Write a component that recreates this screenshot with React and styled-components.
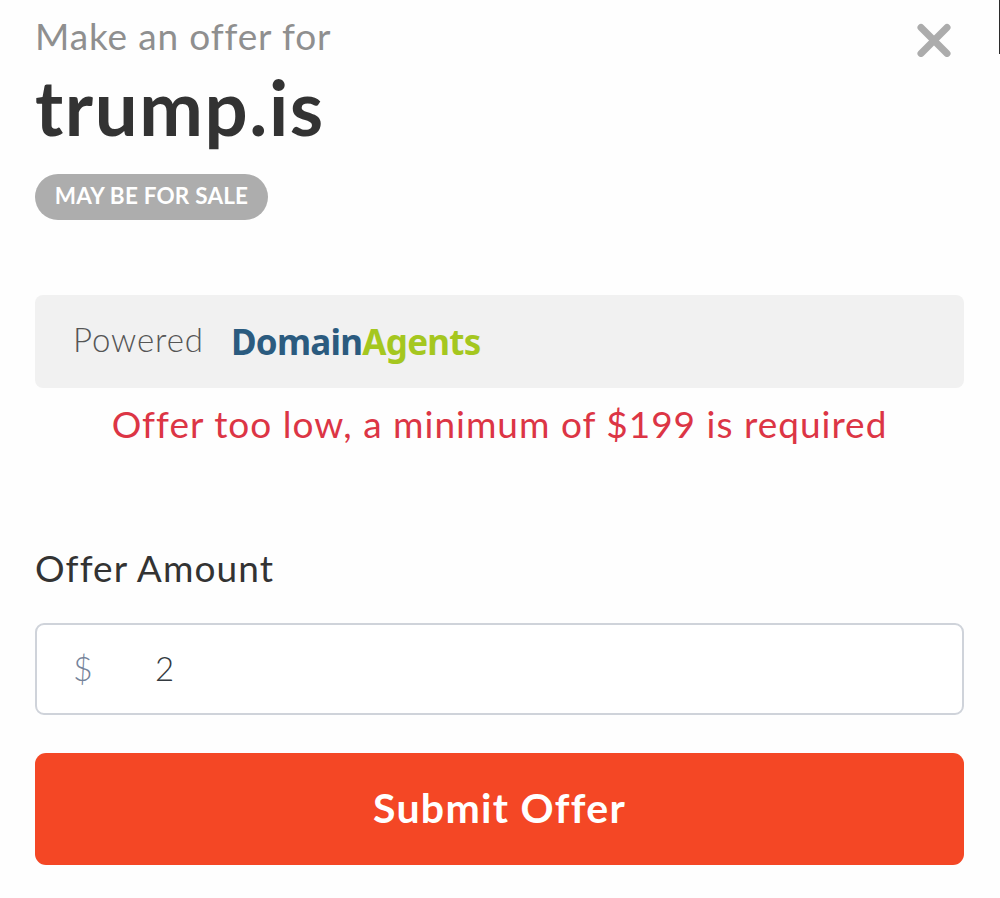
import React, { useState } from 'react';
import styled, { createGlobalStyle } from 'styled-components';

const GlobalStyle = createGlobalStyle`
  * {
    box-sizing: border-box;
  }

  body {
    margin: 0;
    background: #fff;
    font-family: Lato, 'Open Sans', sans-serif;
  }
`;

const Modal = styled.main`
  position: relative;
  height: 898px;
  padding: 14px 36px 0 35px;
  overflow: hidden;
  background: #fefefe;
`;

const PageEdge = styled.span`
  position: absolute;
  top: 0;
  right: 0;
  width: 1px;
  height: 54px;
  background: #2b2b2b;
`;

const Header = styled.header`
  display: flex;
  justify-content: space-between;
  align-items: flex-start;
`;

const Intro = styled.p`
  margin: 0;
  font-size: 37px;
  line-height: 44px;
  letter-spacing: 0.85px;
  color: #8f8f8f;
`;

const Domain = styled.h1`
  margin: 9px 0 0;
  font-size: 76px;
  font-weight: 700;
  line-height: 80px;
  letter-spacing: 1.6px;
  color: #333;
`;

const CloseButton = styled.button`
  display: flex;
  margin: 9px 13px 0 0;
  padding: 0;
  border: 0;
  background: none;
  cursor: pointer;
`;

const Badge = styled.span`
  display: flex;
  justify-content: center;
  width: 233px;
  height: 46px;
  margin-top: 27px;
  border-radius: 23px;
  background: #adadad;
  color: #fff;
  font-size: 22.5px;
  font-weight: 700;
  line-height: 44px;
  letter-spacing: 0.2px;
  white-space: nowrap;
`;

const Partner = styled.div`
  display: flex;
  height: 93px;
  margin-top: 75px;
  padding-left: 38px;
  border-radius: 8px;
  background: #f1f1f1;
  white-space: nowrap;
`;

const Powered = styled.span`
  width: 158px;
  font-size: 33px;
  font-weight: 300;
  line-height: 89px;
  letter-spacing: 0.9px;
  color: #555;
`;

const Logo = styled.span`
  font-family: 'Noto Sans', 'Open Sans', sans-serif;
  font-size: 35px;
  font-weight: 700;
  line-height: 93px;
  letter-spacing: -0.75px;
  color: #2b5b7f;
`;

const LogoAccent = styled.span`
  color: #a5c71f;
`;

const ErrorText = styled.p`
  margin: 14px 0 0;
  font-size: 37px;
  line-height: 44px;
  letter-spacing: 1px;
  text-align: center;
  white-space: nowrap;
  color: #dc3545;
`;

const Label = styled.label`
  display: block;
  margin-top: 100px;
  font-size: 37px;
  line-height: 44px;
  letter-spacing: 1.1px;
  color: #333;
`;

const Field = styled.div`
  display: flex;
  align-items: center;
  height: 92px;
  margin-top: 33px;
  padding: 0 0 3px 36px;
  border: 2px solid #cfd3da;
  border-radius: 9px;
  background: #fff;
`;

const Currency = styled.span`
  width: 82px;
  font-size: 34px;
  font-weight: 300;
  color: #75839a;
`;

const AmountInput = styled.input`
  flex: 1;
  min-width: 0;
  padding: 0;
  border: 0;
  outline: 0;
  background: transparent;
  font: 300 33px Lato, sans-serif;
  color: #343a40;
`;

const Submit = styled.button`
  display: block;
  width: 100%;
  height: 112px;
  margin-top: 38px;
  padding: 0 0 3px;
  border: 0;
  border-radius: 11px;
  background: #f44725;
  color: #fff;
  font: 700 41px/109px Lato, sans-serif;
  letter-spacing: 1.3px;
`;

const App = () => {
  const [amount, setAmount] = useState('2');

  return (
    <Modal>
      <GlobalStyle />
      <PageEdge />
      <Header>
        <div>
          <Intro>Make an offer for</Intro>
          <Domain>trump.is</Domain>
        </div>
        <CloseButton aria-label="Close">
          <svg width="34" height="34" viewBox="0 0 34 34" fill="none">
            <path
              d="M4 4.5 30 30.5M30 4.5 4 30.5"
              stroke="#acacac"
              strokeWidth="7"
              strokeLinecap="round"
            />
          </svg>
        </CloseButton>
      </Header>
      <Badge>MAY BE FOR SALE</Badge>
      <Partner>
        <Powered>Powered</Powered>
        <Logo>
          Domain<LogoAccent>Agents</LogoAccent>
        </Logo>
      </Partner>
      <ErrorText>Offer too low, a minimum of $199 is required</ErrorText>
      <Label htmlFor="amount">Offer Amount</Label>
      <Field>
        <Currency>$</Currency>
        <AmountInput
          id="amount"
          value={amount}
          onChange={(e) => setAmount(e.target.value)}
        />
      </Field>
      <Submit>Submit Offer</Submit>
    </Modal>
  );
};

export default App;
